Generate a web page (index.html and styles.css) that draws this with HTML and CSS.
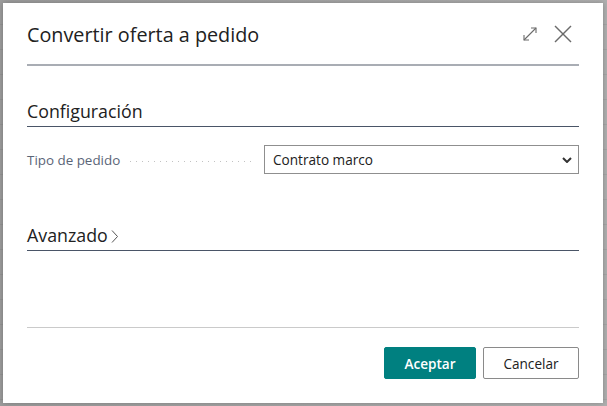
FILE: index.html
```html
<!DOCTYPE html>
<html lang="es">
<head>
<meta charset="utf-8">
<title>Convertir oferta a pedido</title>
<link rel="stylesheet" href="styles.css">
</head>
<body>
<div class="backdrop">
  <div class="dialog">
    <header class="dialog-header">
      <h1 class="dialog-title">Convertir oferta a pedido</h1>
      <div class="header-actions">
        <button class="icon-btn" aria-label="Expandir">
          <svg width="16" height="16" viewBox="0 0 16 16" fill="none" stroke="#6b6b6b" stroke-width="1.1">
            <path d="M2 14 L14 2"/>
            <path d="M9 2 H14 V7"/>
            <path d="M2 9 V14 H7"/>
          </svg>
        </button>
        <button class="icon-btn" aria-label="Cerrar">
          <svg width="18" height="18" viewBox="0 0 18 18" fill="none" stroke="#6b6b6b" stroke-width="1.4">
            <path d="M1 1 L17 17"/>
            <path d="M17 1 L1 17"/>
          </svg>
        </button>
      </div>
    </header>

    <section class="group">
      <h2 class="group-title">Configuración</h2>
      <div class="field">
        <div class="field-caption">
          <span class="field-label">Tipo de pedido</span>
          <span class="field-leader"></span>
        </div>
        <div class="select">
          <span class="select-value">Contrato marco</span>
          <svg class="select-chevron" width="10" height="6" viewBox="0 0 10 6" fill="none" stroke="#333" stroke-width="2">
            <path d="M1 1 L5 5 L9 1"/>
          </svg>
        </div>
      </div>
    </section>

    <section class="group group-collapsed">
      <h2 class="group-title">Avanzado
        <svg class="group-chevron" width="7" height="13" viewBox="0 0 7 13" fill="none" stroke="#555" stroke-width="1">
          <path d="M1 0.5 L6.5 6.5 L1 12.5"/>
        </svg>
      </h2>
    </section>

    <footer class="dialog-footer">
      <button class="btn btn-primary">Aceptar</button>
      <button class="btn btn-secondary">Cancelar</button>
    </footer>
  </div>
</div>
</body>
</html>
```
FILE: styles.css
```css
* {
  box-sizing: border-box;
}

html, body {
  margin: 0;
  padding: 0;
}

body {
  width: 607px;
  height: 406px;
  overflow: hidden;
  font-family: "Open Sans", "Noto Sans", sans-serif;
  color: #212121;
}

.backdrop {
  width: 100%;
  height: 100%;
  padding: 3px;
  background-color: #a7a7a7;
  background-image:
    repeating-linear-gradient(to bottom, transparent 0 24px, rgba(0, 0, 0, 0.06) 24px 25px),
    linear-gradient(to right, #9d9d9d, #b0b0b0);
}

.dialog {
  width: 600px;
  height: 400px;
  background: #fff;
  padding: 0 24px;
  display: flex;
  flex-direction: column;
  box-shadow: 0 0 6px rgba(0, 0, 0, 0.25);
}

.dialog-header {
  height: 63px;
  display: flex;
  align-items: center;
  justify-content: space-between;
  border-bottom: 2px solid #a9adb4;
}

.dialog-title {
  margin: 0;
  font-size: 19.8px;
  font-weight: 400;
  color: #212121;
  padding-top: 1px;
}

.header-actions {
  display: flex;
  align-items: center;
  gap: 16px;
  margin-right: 7px;
}

.icon-btn {
  background: none;
  border: 0;
  padding: 0;
  display: flex;
}

.group {
  margin-top: 34px;
}

.group-title {
  margin: 0;
  font-size: 17.8px;
  font-weight: 400;
  color: #212121;
  line-height: 23px;
  padding-bottom: 3px;
  border-bottom: 1px solid #4a5567;
  display: flex;
  align-items: center;
}

.field {
  margin-top: 18px;
  display: flex;
  align-items: center;
}

.field-caption {
  width: 237px;
  flex: 0 0 237px;
  display: flex;
  align-items: center;
}

.field-label {
  font-size: 13.4px;
  color: #5a6577;
}

.field-leader {
  flex: 1;
  margin: 4px 8px 0 10px;
  height: 1px;
  background-image: repeating-linear-gradient(to right, #c2c2c2 0 1px, transparent 1px 6px);
}

.select {
  flex: 1;
  height: 29px;
  border: 1px solid #8f8f8f;
  display: flex;
  align-items: center;
  justify-content: space-between;
  padding: 0 6px 0 8px;
}

.select-value {
  font-size: 13.6px;
  color: #212121;
}

.group-collapsed {
  margin-top: 50px;
}

.group-chevron {
  margin-left: 3px;
  margin-top: 1px;
}

.dialog-footer {
  margin-top: auto;
  margin-bottom: 24px;
  border-top: 1px solid #cacaca;
  padding-top: 19px;
  display: flex;
  justify-content: flex-end;
  gap: 7px;
}

.btn {
  height: 32px;
  font-family: inherit;
  font-size: 13.6px;
  border-radius: 2px;
  padding: 0;
}

.btn-primary {
  width: 92px;
  background: #008080;
  border: 1px solid #008080;
  color: #fff;
  font-weight: 600;
}

.btn-secondary {
  width: 96px;
  background: #fff;
  border: 1px solid #8a8a8a;
  color: #212121;
}
```
